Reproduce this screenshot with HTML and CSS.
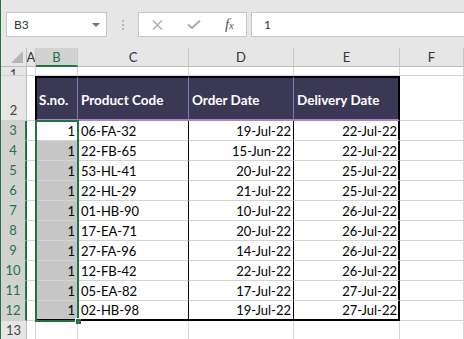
FILE: index.html
```html
<!DOCTYPE html>
<html lang="en">
<head>
    <meta charset="UTF-8">
    <title>Book1 - Excel</title>
    <link rel="stylesheet" href="styles.css">
</head>
<body>
    <div class="app">
        <!-- formula bar -->
        <div class="formula-bar">
            <div class="name-box"><span>B3</span><span class="arrow"></span></div>
            <div class="grip"><i></i><i></i><i></i></div>
            <div class="fx-buttons">
                <svg class="icon-cancel" width="11" height="10" viewBox="0 0 11 10"><path d="M1 0.5L10 9.5M10 0.5L1 9.5" /></svg>
                <svg class="icon-enter" width="14" height="9" viewBox="0 0 14 9"><path d="M1 4.5L5 8L13 0.5" /></svg>
                <span class="fx">f<small>x</small></span>
            </div>
            <div class="formula-input">1</div>
        </div>

        <!-- sheet -->
        <div class="sheet">
            <div class="corner"><span class="tri"></span></div>
            <div class="ch">A</div>
            <div class="ch active">B</div>
            <div class="ch">C</div>
            <div class="ch">D</div>
            <div class="ch">E</div>
            <div class="ch">F</div>

            <div class="rh r1">1</div>
            <div class="c"></div><div class="c"></div><div class="c"></div><div class="c"></div><div class="c"></div><div class="c"></div>

            <div class="rh">2</div>
            <div class="c edge"></div>
            <div class="th first">S.no.</div>
            <div class="th">Product Code</div>
            <div class="th">Order Date</div>
            <div class="th last">Delivery Date</div>
            <div class="c"></div>

            <div class="rh sel">3</div>
            <div class="c edge"></div><div class="c num">1</div><div class="c code">06-FA-32</div><div class="c date">19-Jul-22</div><div class="c date last">22-Jul-22</div><div class="c"></div>
            <div class="rh sel">4</div>
            <div class="c edge"></div><div class="c num hl">1</div><div class="c code">22-FB-65</div><div class="c date">15-Jun-22</div><div class="c date last">22-Jul-22</div><div class="c"></div>
            <div class="rh sel">5</div>
            <div class="c edge"></div><div class="c num hl">1</div><div class="c code">53-HL-41</div><div class="c date">20-Jul-22</div><div class="c date last">25-Jul-22</div><div class="c"></div>
            <div class="rh sel">6</div>
            <div class="c edge"></div><div class="c num hl">1</div><div class="c code">22-HL-29</div><div class="c date">21-Jul-22</div><div class="c date last">25-Jul-22</div><div class="c"></div>
            <div class="rh sel">7</div>
            <div class="c edge"></div><div class="c num hl">1</div><div class="c code">01-HB-90</div><div class="c date">10-Jul-22</div><div class="c date last">26-Jul-22</div><div class="c"></div>
            <div class="rh sel">8</div>
            <div class="c edge"></div><div class="c num hl">1</div><div class="c code">17-EA-71</div><div class="c date">20-Jul-22</div><div class="c date last">26-Jul-22</div><div class="c"></div>
            <div class="rh sel">9</div>
            <div class="c edge"></div><div class="c num hl">1</div><div class="c code">27-FA-96</div><div class="c date">14-Jul-22</div><div class="c date last">26-Jul-22</div><div class="c"></div>
            <div class="rh sel">10</div>
            <div class="c edge"></div><div class="c num hl">1</div><div class="c code">12-FB-42</div><div class="c date">22-Jul-22</div><div class="c date last">26-Jul-22</div><div class="c"></div>
            <div class="rh sel">11</div>
            <div class="c edge"></div><div class="c num hl">1</div><div class="c code">05-EA-82</div><div class="c date">17-Jul-22</div><div class="c date last">27-Jul-22</div><div class="c"></div>
            <div class="rh sel">12</div>
            <div class="c edge"></div><div class="c num hl end">1</div><div class="c code end">02-HB-98</div><div class="c date end">19-Jul-22</div><div class="c date last end">27-Jul-22</div><div class="c"></div>

            <div class="rh">13</div>
            <div class="c"></div><div class="c"></div><div class="c"></div><div class="c"></div><div class="c"></div><div class="c"></div>

            <!-- selected range B3:B12 -->
            <div class="selection"><span class="handle"></span></div>
        </div>
    </div>
</body>
</html>
```

FILE: styles.css
```css
/* General */
body {
    margin: 0;
    font-family: 'Lato', 'Open Sans', sans-serif;
    background: #fff;
    overflow: hidden;
}

.app {
    width: 463px;
    height: 339px;
    border-left: 1px solid #217346;
    overflow: hidden;
}

/* Formula bar */
.formula-bar {
    height: 48px;
    box-sizing: border-box;
    padding: 12px 0 11px 5px;
    display: flex;
    background: #e6e6e6;
}

.name-box {
    width: 101px;
    box-sizing: border-box;
    border: 1px solid #c6c6c6;
    background: #fff;
    display: flex;
    align-items: center;
    justify-content: space-between;
    padding: 0 6px 0 7px;
    font-size: 12px;
    color: #333;
}

.name-box .arrow {
    width: 0;
    height: 0;
    border-left: 4px solid transparent;
    border-right: 4px solid transparent;
    border-top: 4px solid #707070;
}

.grip {
    width: 31px;
    display: flex;
    flex-direction: column;
    align-items: center;
    justify-content: center;
    gap: 2px;
}

.grip i {
    width: 2px;
    height: 2px;
    background: #b4b4b4;
}

.fx-buttons {
    width: 109px;
    box-sizing: border-box;
    border: 1px solid #c6c6c6;
    background: #fff;
    display: flex;
    align-items: center;
    padding: 0 12px 0 13px;
    justify-content: space-between;
}

.fx-buttons svg path {
    fill: none;
    stroke: #ababab;
}

.icon-cancel path { stroke-width: 1.3; }
.icon-enter path { stroke-width: 2; }

.fx {
    font-family: 'Liberation Serif', serif;
    font-style: italic;
    font-size: 15px;
    color: #555;
    line-height: 1;
}

.fx small {
    font-size: 11px;
}

.formula-input {
    flex: 1;
    margin-left: 4px;
    box-sizing: border-box;
    border: 1px solid #c6c6c6;
    border-right: none;
    background: #fff;
    display: flex;
    align-items: center;
    padding-left: 12px;
    font-size: 12px;
    color: #333;
}

/* Sheet grid */
.sheet {
    position: relative;
    display: grid;
    grid-template-columns: 26px 9px 42px 111px 105px 106px 64px;
    grid-template-rows: 19px 9px 45px repeat(10, 20px) 20px;
    font-size: 13px;
}

.sheet > div {
    box-sizing: border-box;
    white-space: nowrap;
    overflow: hidden;
}

.corner {
    background: #e6e6e6;
    border-right: 1px solid #bdbdbd;
    border-bottom: 1px solid #bdbdbd;
    display: flex;
    align-items: flex-end;
    justify-content: flex-end;
    padding: 0 3px 3px 0;
}

.corner .tri {
    width: 0;
    height: 0;
    border-left: 12px solid transparent;
    border-bottom: 12px solid #b5b5b5;
}

.ch {
    background: #e6e6e6;
    border-right: 1px solid #c8c8c8;
    border-bottom: 1px solid #bdbdbd;
    display: flex;
    align-items: center;
    justify-content: center;
    color: #333;
}

.ch.active {
    background: #d2d2d2;
    color: #217346;
    border-bottom: 2px solid #217346;
}

.rh {
    background: #e6e6e6;
    border-right: 1px solid #bdbdbd;
    border-bottom: 1px solid #d0d0d0;
    display: flex;
    align-items: flex-end;
    justify-content: center;
    padding-bottom: 2px;
    color: #444;
}

.rh.r1 {
    align-items: flex-start;
    line-height: 14px;
    padding: 0;
}

.rh.sel {
    background: #d2d2d2;
    color: #217346;
    border-right: 2px solid #217346;
}

.c {
    border-right: 1px solid #d4d4d4;
    border-bottom: 1px solid #d4d4d4;
    display: flex;
    align-items: center;
    padding: 0 2px;
    color: #000;
}

.c.edge {
    border-right-color: #000;
}

.c.num {
    justify-content: flex-end;
}

.c.num.hl {
    background: #c6c6c6;
}

.c.code {
    padding-left: 3px;
    border-right-color: #000;
}

.c.date {
    justify-content: flex-end;
    border-right-color: #000;
}

.c.last {
    border-right: 2px solid #000;
    padding-right: 1px;
}

.c.end {
    border-bottom: 2px solid #000;
}

/* Table header */
.th {
    background: #3b3856;
    color: #fff;
    font-weight: bold;
    font-size: 13.5px;
    border-top: 2px solid #000;
    border-bottom: 2px solid #a686cc;
    border-right: 1px solid #8579b3;
    display: flex;
    align-items: center;
    padding: 2px 0 0 3px;
}

.th.first {
    border-left: 1px solid #000;
    padding-left: 2px;
}

.th.last {
    border-right: 2px solid #000;
}

/* Selection */
.selection {
    position: absolute;
    left: 34px;
    top: 72px;
    width: 44px;
    height: 202px;
    box-sizing: border-box;
    border: 2px solid #217346;
    overflow: visible !important;
}

.selection .handle {
    position: absolute;
    right: -4px;
    bottom: -4px;
    width: 5px;
    height: 5px;
    background: #217346;
    border: 1px solid #fff;
    border-right: none;
    border-bottom: none;
}
```
